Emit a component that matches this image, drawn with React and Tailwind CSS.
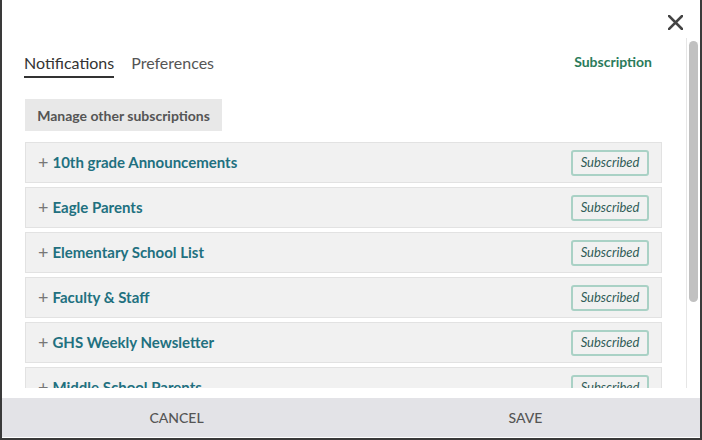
import React from 'react';

const lists = [
  '10th grade Announcements',
  'Eagle Parents',
  'Elementary School List',
  'Faculty & Staff',
  'GHS Weekly Newsletter',
  'Middle School Parents',
];

export default function App() {
  return (
    <div className="w-[702px] h-[440px] bg-[#3a3a3a] px-[2px] pb-[2px] font-['Lato',sans-serif]">
      <div className="h-full bg-white flex flex-col">
        {/* Close */}
        <div className="h-[38px] flex justify-end items-start pt-[15px] pr-[17px]">
          <svg width="15" height="15" viewBox="0 0 15 15" className="text-[#444]">
            <path d="M1 1 L14 14 M14 1 L1 14" stroke="currentColor" strokeWidth="2.6" strokeLinecap="square" />
          </svg>
        </div>

        {/* Body */}
        <div className="flex h-[350px]">
          <div className="flex-1 overflow-hidden pl-[23px] pr-[24px]">
            <div className="mt-[15px] flex items-start justify-between">
              <div className="flex gap-[17px] text-[16px] leading-[20px] -ml-[1px]">
                <div className="text-[#333] pb-[3px] border-b-2 border-[#333]">Notifications</div>
                <div className="text-[#555]">Preferences</div>
              </div>
              <div className="text-[14px] leading-[20px] font-bold text-[#2a7b5b] mr-[10px] -mt-[1px]">
                Subscription
              </div>
            </div>

            <button className="mt-[21px] w-[197px] h-[32px] bg-[#e8e8e8] text-[14px] font-bold text-[#555] flex items-center justify-center">
              Manage other subscriptions
            </button>

            <div className="mt-[11px] flex flex-col gap-[4px]">
              {lists.map((name) => (
                <div
                  key={name}
                  className="h-[41px] shrink-0 bg-[#f1f1f1] border border-[#e2e2e2] flex items-center justify-between pl-[12px] pr-[12px]"
                >
                  <div className="flex items-center gap-[4px] text-[15px]">
                    <span className="text-[#777] text-[18px] leading-none -mt-[1px]">+</span>
                    <span className="font-bold text-[#21707f]">{name}</span>
                  </div>
                  <div className="w-[78px] h-[26px] border-2 border-[#a9d1c5] rounded-[3px] flex items-center justify-center text-[13px] italic text-[#2f5c57]">
                    Subscribed
                  </div>
                </div>
              ))}
            </div>
          </div>

          {/* Scrollbar */}
          <div className="w-[14px] border-l border-[#e6e6e6] pt-[3px] pl-[2px]">
            <div className="w-[9px] h-[261px] rounded-full bg-[#c1c1c1]" />
          </div>
        </div>

        <div className="h-[10px]" />

        {/* Footer */}
        <div className="h-[39px] bg-[#e3e3e7] flex text-[14px] font-medium text-[#555]">
          <button className="flex-1 flex items-center justify-center">CANCEL</button>
          <button className="flex-1 flex items-center justify-center">SAVE</button>
        </div>
      </div>
    </div>
  );
}
